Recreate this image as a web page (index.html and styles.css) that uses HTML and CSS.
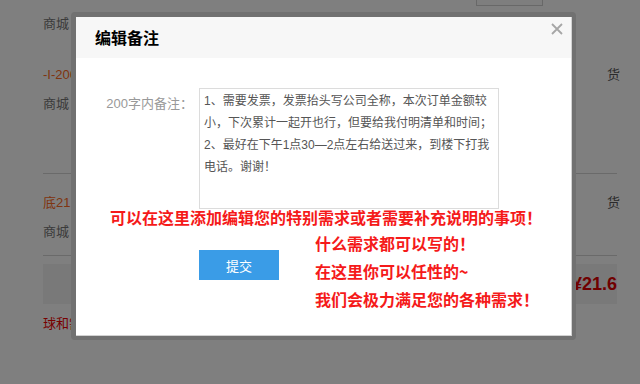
FILE: index.html
```html
<!DOCTYPE html>
<html lang="zh-CN">
<head>
<meta charset="utf-8">
<title>编辑备注</title>
<link rel="stylesheet" href="styles.css">
</head>
<body>
<div class="page">
  <div class="toolbar"><span class="tool-btn"></span></div>
  <div class="shop first">商城</div>

  <div class="item">
    <div class="item-row"><span class="promo">-I-200元</span><span class="ship">货</span></div>
    <div class="shop">商城</div>
  </div>
  <div class="sep"></div>

  <div class="item item-b">
    <div class="item-row"><span class="promo">底21.6</span><span class="ship">货</span></div>
    <div class="shop">商城</div>
  </div>
  <div class="sep sep-b"></div>

  <div class="total"><span class="price">¥21.6</span></div>
  <div class="note">球和需求</div>
</div>

<div class="overlay"></div>

<div class="dialog">
  <div class="dialog-inner">
    <div class="dialog-head">
      <h2 class="dialog-title">编辑备注</h2>
      <span class="dialog-close" aria-label="关闭">
        <svg width="12" height="12" viewBox="0 0 12 12"><path d="M1 1 L11 11 M11 1 L1 11" stroke="#a6a6a6" stroke-width="1.8" fill="none"/></svg>
      </span>
    </div>
    <div class="dialog-body">
      <div class="form-row">
        <label class="form-label" for="remark">200字内备注：</label>
        <textarea id="remark" class="remark">1、需要发票，发票抬头写公司全称，本次订单金额较
小，下次累计一起开也行，但要给我付明清单和时间；
2、最好在下午1点30—2点左右给送过来，到楼下打我
电话。谢谢！</textarea>
      </div>
      <p class="tip tip-main">可以在这里添加编辑您的特别需求或者需要补充说明的事项！</p>
      <div class="action-row">
        <button class="submit" type="button">提交</button>
        <div class="tip-list">
          <p class="tip">什么需求都可以写的！</p>
          <p class="tip">在这里你可以任性的~</p>
          <p class="tip">我们会极力满足您的各种需求！</p>
        </div>
      </div>
    </div>
  </div>
</div>
</body>
</html>
```

FILE: styles.css
```css
* { box-sizing: border-box; }
html, body {
  margin: 0;
  padding: 0;
  width: 640px;
  height: 384px;
  overflow: hidden;
  background: #fff;
  font-family: "Liberation Sans", "Noto Sans CJK SC", sans-serif;
}

/* underlying page */
.page {
  width: 640px;
  height: 384px;
  padding: 0 23px 0 43px;
  font-size: 13px;
  color: #777;
}
.toolbar {
  height: 6px;
}
.tool-btn {
  display: block;
  margin-left: 433px;
  width: 67px;
  height: 6px;
  border: 1px solid #d0d0d0;
  border-top: none;
  background: #fdfdfd;
}
.shop {
  line-height: 20px;
  height: 20px;
}
.shop.first { margin-top: 8px; }
.item { margin-top: 31px; }
.item-row {
  display: flex;
  justify-content: space-between;
  line-height: 20px;
  height: 20px;
  margin-bottom: 9px;
}
.promo { color: #ff6a22; }
.ship { color: #555; margin-right: -3px; }
.sep {
  margin-top: 59px;
  height: 1px;
  background: #d4d4d4;
}
.item-b { margin-top: 19px; }
.sep-b { margin-top: 13px; }
.total {
  margin-top: 8px;
  height: 40px;
  background: #f2f2f2;
  display: flex;
  align-items: center;
  justify-content: flex-end;
}
.price {
  color: #e00000;
  font-size: 18px;
  font-weight: bold;
}
.note {
  margin-top: 10px;
  line-height: 20px;
  color: #f00000;
}

/* overlay */
.overlay {
  position: fixed;
  inset: 0;
  background: rgba(0, 0, 0, 0.5);
}

/* dialog */
.dialog {
  position: absolute;
  left: 71px;
  top: 12px;
  width: 505px;
  height: 328px;
  padding: 5px 4px 4px 5px;
  background: #717171;
  border-radius: 4px;
}
.dialog-inner {
  width: 496px;
  height: 319px;
  background: #fff;
  border-right: 1px solid #d2d2d2;
  border-bottom: 1px solid #d2d2d2;
  position: relative;
}
.dialog-head {
  height: 41px;
  background: #f7f7f7;
  padding-left: 19px;
  position: relative;
}
.dialog-title {
  margin: 0;
  font-size: 16px;
  font-weight: bold;
  line-height: 41px;
  color: #000;
  font-family: "Noto Sans CJK SC", sans-serif;
}
.dialog-close {
  position: absolute;
  right: 8px;
  top: 6px;
  width: 12px;
  height: 12px;
  display: block;
}
.dialog-close svg { display: block; }

.dialog-body {
  padding-top: 30px;
}
.form-row {
  display: flex;
  align-items: flex-start;
  gap: 6px;
}
.form-label {
  width: 117px;
  text-align: right;
  font-size: 13px;
  line-height: 22px;
  margin-top: 5px;
  color: #999;
}
.remark {
  width: 300px;
  height: 121px;
  margin: 0;
  padding: 1px 4px;
  border: 1px solid #dcdcdc;
  font-family: "Liberation Sans", "Noto Sans CJK SC", sans-serif;
  font-size: 12px;
  line-height: 22px;
  color: #555;
  resize: none;
  overflow: hidden;
  white-space: pre;
}

.tip {
  margin: 0;
  color: #f51a1a;
  font-size: 16px;
  font-weight: bold;
  font-family: "Noto Sans CJK SC", sans-serif;
  line-height: 28px;
  white-space: nowrap;
}
.tip-main {
  padding-left: 34px;
  line-height: 16px;
}
.action-row {
  display: flex;
  align-items: flex-start;
  padding-left: 123px;
  margin-top: 4px;
}
.submit {
  width: 80px;
  height: 30px;
  margin-top: 21px;
  border: none;
  background: #3a9ce7;
  color: #fff;
  font-size: 13px;
  font-family: "Noto Sans CJK SC", sans-serif;
  padding: 0;
}
.tip-list {
  margin-left: 36px;
}
```
